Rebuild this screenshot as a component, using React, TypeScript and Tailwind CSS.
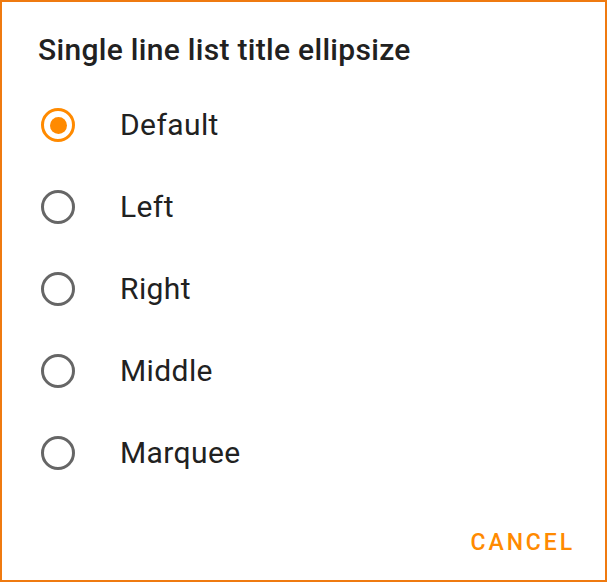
import * as React from "react";

const options = ["Default", "Left", "Right", "Middle", "Marquee"];

/* ---------------- Radio ---------------- */

const Radio = ({ checked }: { checked: boolean }) =>
  checked ? (
    <span className="flex h-[34px] w-[34px] items-center justify-center rounded-full border-[3px] border-[#ff8a00]">
      <span className="h-[17px] w-[17px] rounded-full bg-[#ff8a00]" />
    </span>
  ) : (
    <span className="h-[34px] w-[34px] rounded-full border-[3px] border-[#666666]" />
  );

/* ---------------- App ---------------- */

export default function App() {
  const [value, setValue] = React.useState("Default");

  return (
    <div className="flex h-[582px] w-[607px] flex-col border-2 border-[#ef7a10] bg-white font-['Roboto',sans-serif] text-[#212121]">
      <h2 className="px-[36px] pt-[30px] text-[30px] leading-[36px] font-medium tracking-[0.3px]">
        Single line list title ellipsize
      </h2>

      <ul className="mt-[16px] flex flex-col">
        {options.map((opt) => (
          <li
            key={opt}
            onClick={() => setValue(opt)}
            className="flex h-[82px] cursor-pointer items-center gap-[45px] pl-[39px]"
          >
            <Radio checked={value === opt} />
            <span className="text-[30px] leading-none tracking-[0.4px]">{opt}</span>
          </li>
        ))}
      </ul>

      <div className="mt-auto flex justify-end px-[30px] pb-[20px]">
        <button className="text-[23px] font-medium tracking-[2.9px] text-[#ff8a00]">
          CANCEL
        </button>
      </div>
    </div>
  );
}
